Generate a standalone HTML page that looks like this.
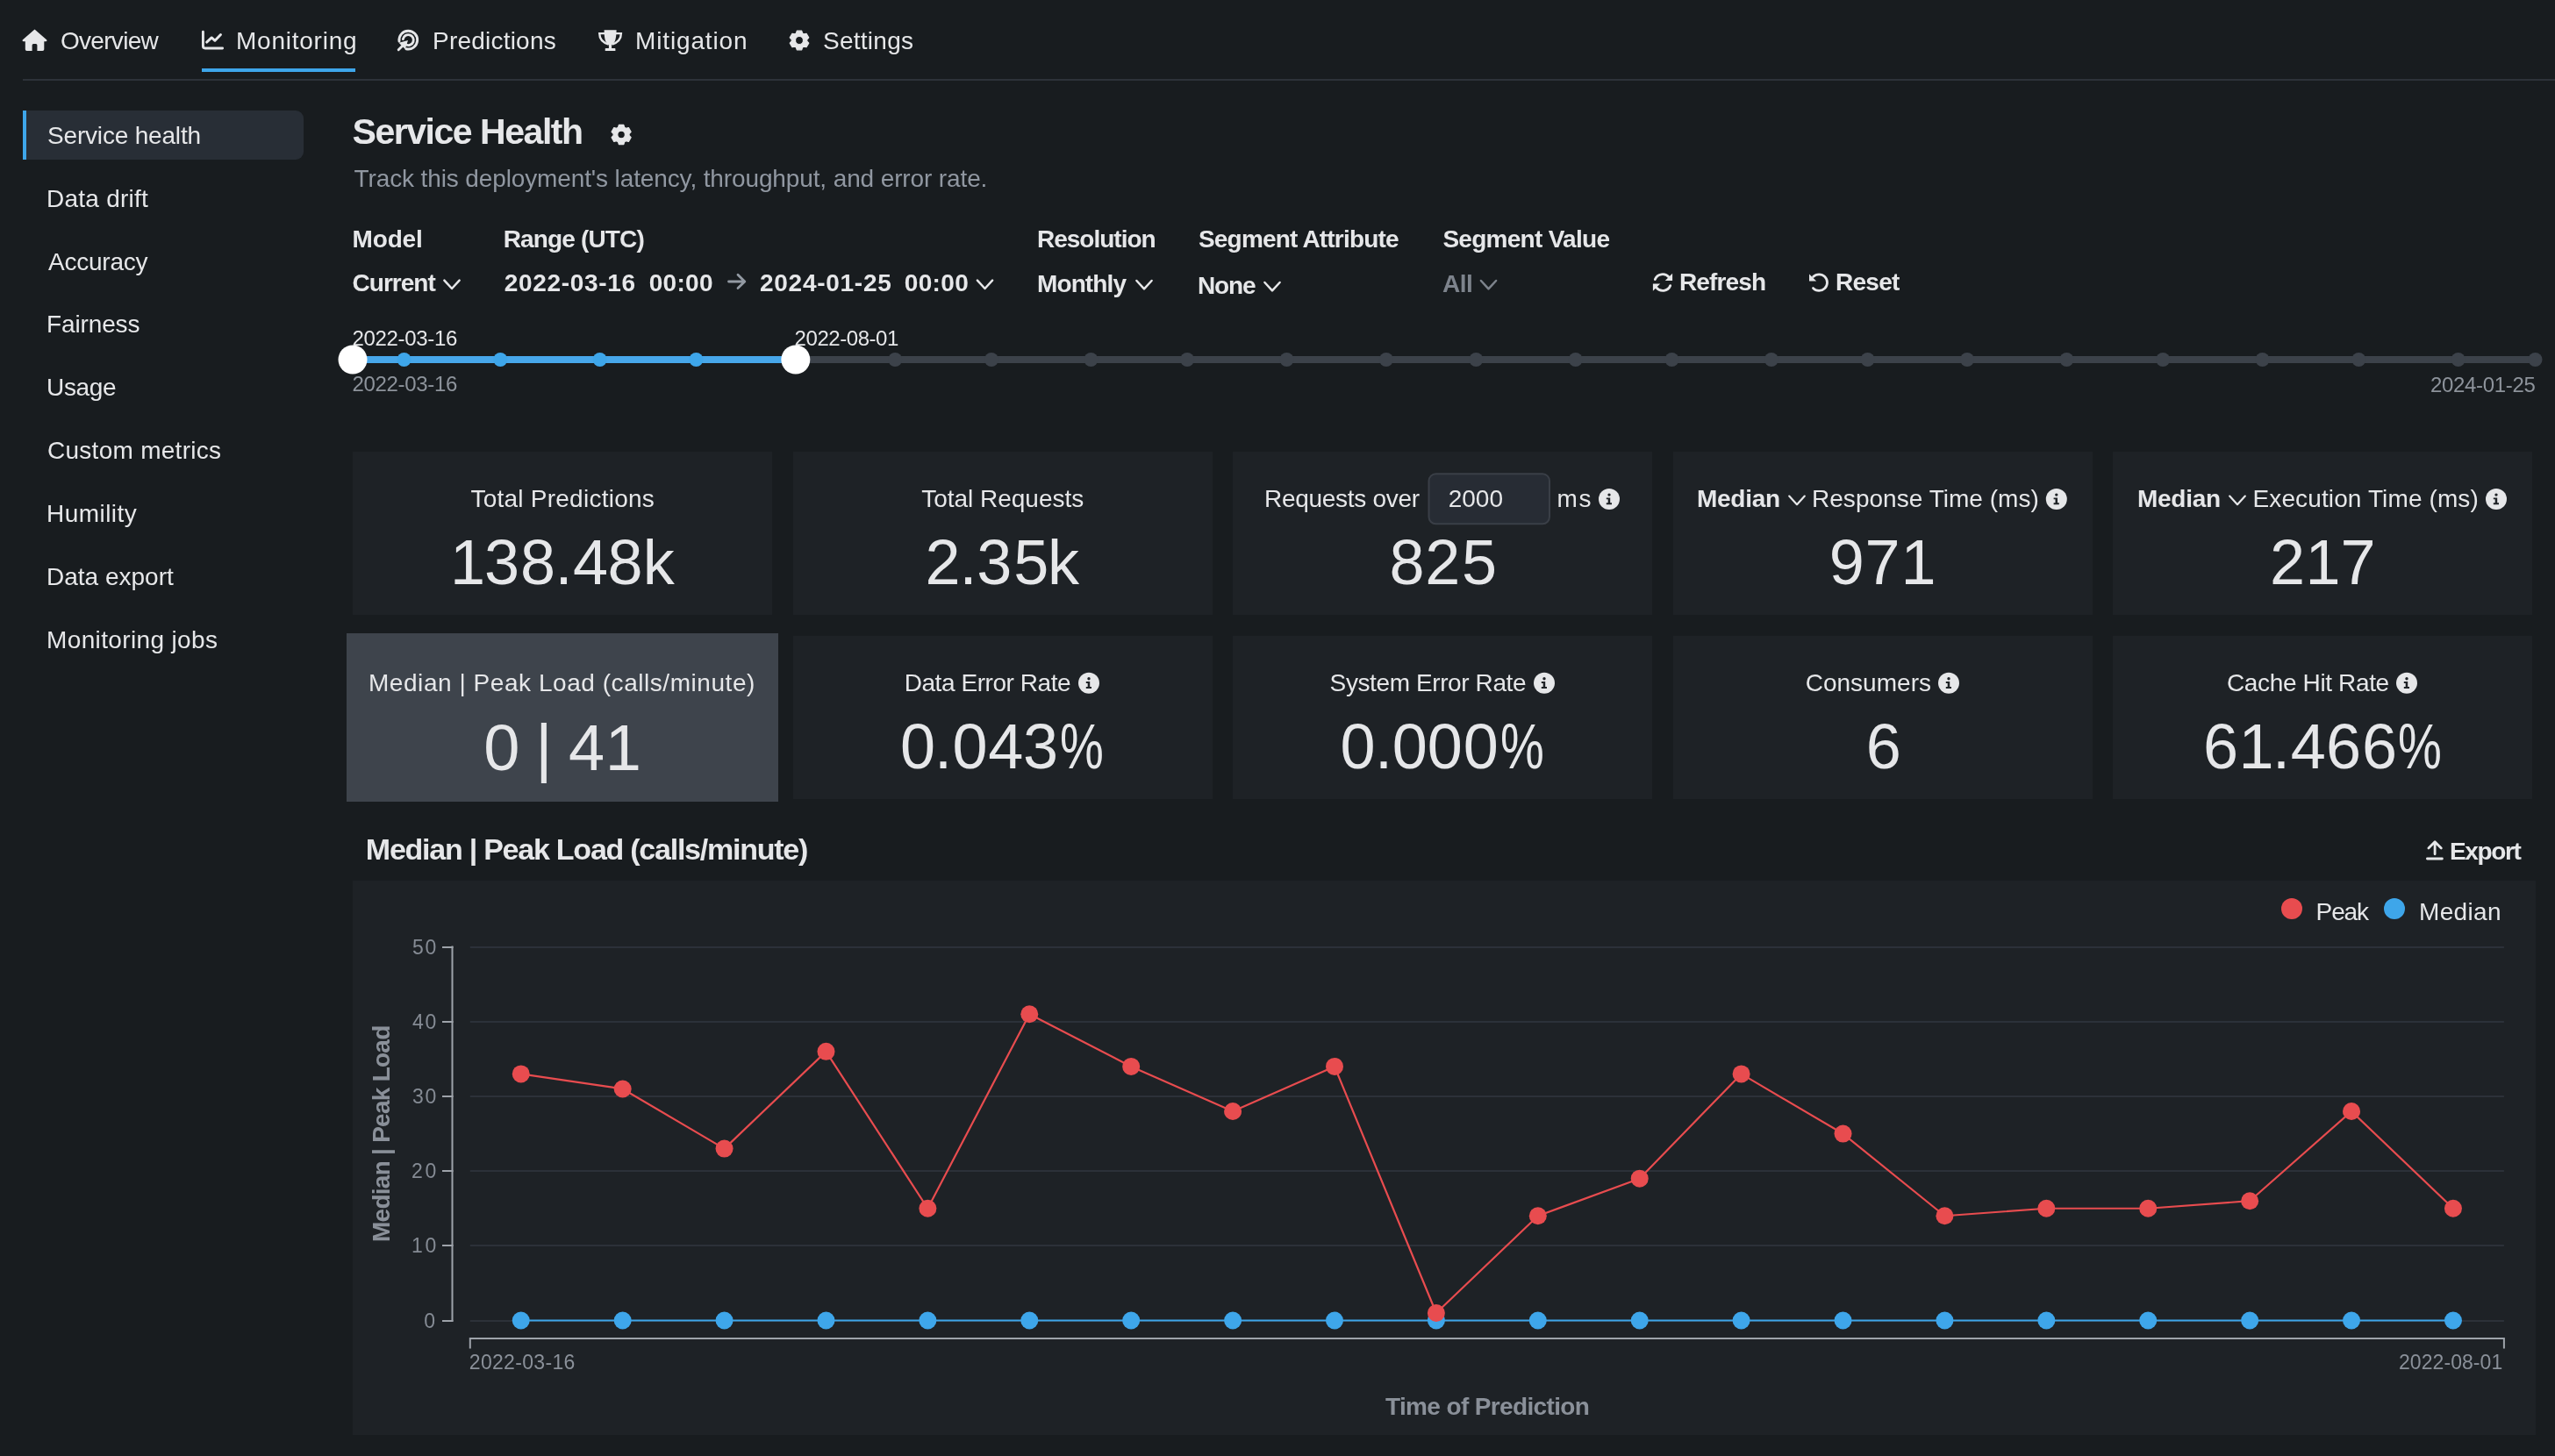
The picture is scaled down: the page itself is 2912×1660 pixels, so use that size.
<!DOCTYPE html>
<html><head><meta charset="utf-8"><style>
html,body{margin:0;padding:0;}
body{width:2912px;height:1660px;background:#181c1f;position:relative;overflow:hidden;font-family:"Liberation Sans",sans-serif;}
.t{position:absolute;white-space:pre;line-height:1;}
.r{position:absolute;}
svg{position:absolute;left:0;top:0;}
</style></head><body>
<div class="r" style="left:230px;top:78px;width:175px;height:4px;background:#3ea6ea;"></div><div class="r" style="left:26px;top:90px;width:2886px;height:2px;background:#2d3239;"></div><div class="r" style="left:26px;top:126px;width:320px;height:56px;background:#282e36;border-radius:0 9px 9px 0;"></div><div class="r" style="left:26px;top:126px;width:4px;height:56px;background:#3ea6ea;"></div><div class="r" style="left:402px;top:515px;width:477.5px;height:186px;background:#1e2226;"></div><div class="r" style="left:395px;top:722px;width:492px;height:192px;background:#3e444c;"></div><div class="r" style="left:904px;top:515px;width:477.5px;height:186px;background:#1e2226;"></div><div class="r" style="left:904px;top:725px;width:477.5px;height:186px;background:#1e2226;"></div><div class="r" style="left:1405px;top:515px;width:477.5px;height:186px;background:#1e2226;"></div><div class="r" style="left:1405px;top:725px;width:477.5px;height:186px;background:#1e2226;"></div><div class="r" style="left:1907px;top:515px;width:477.5px;height:186px;background:#1e2226;"></div><div class="r" style="left:1907px;top:725px;width:477.5px;height:186px;background:#1e2226;"></div><div class="r" style="left:2408px;top:515px;width:477.5px;height:186px;background:#1e2226;"></div><div class="r" style="left:2408px;top:725px;width:477.5px;height:186px;background:#1e2226;"></div><div class="r" style="left:402px;top:1004px;width:2488px;height:632px;background:#1e2226;"></div>
<svg width="2912" height="1660" viewBox="0 0 2912 1660">
<path fill="#e6e7e9" d="M39.5,33.6 L53.3,45.4 Q54,46.9 52.4,47.3 L50.3,47.3 L50.3,56.2 Q50.3,58 48.5,58 L42.4,58 L42.4,51.6 Q42.4,50.1 40.9,50.1 L38.1,50.1 Q36.6,50.1 36.6,51.6 L36.6,58 L30.6,58 Q28.8,58 28.8,56.2 L28.8,47.3 L26.6,47.3 Q25,46.9 25.7,45.4 Z"/><path fill="none" stroke="#e6e7e9" stroke-width="2.9" stroke-linecap="round" stroke-linejoin="round" d="M231.4,36.3 V52.6 Q231.4,55 233.8,55 H253.6 M235.6,48.1 L241.2,42.9 L245,46.3 L251.5,39.6"/><path fill="none" stroke="#e6e7e9" stroke-width="2.9" stroke-linecap="round" d="M455.00,47.05 A10.4,10.4 0 1 1 462.96,55.73 M459.39,44.56 A6,6 0 1 1 462.76,51.04 M454.2,56.8 L459.5,51.5"/><path fill="#e6e7e9" d="M465,46 L454.6,48.8 L458.2,52.4 L461.8,56 Z"/><path fill="#e6e7e9" d="M688.6,34.3 H702.6 Q702.4,44 700.6,47.5 Q699.2,50 697.1,51.2 V55 H700.6 Q701.4,55 701.4,55.8 V58 H689.7 V55.8 Q689.7,55 690.5,55 H693.9 V51.2 Q691.8,50 690.4,47.5 Q688.6,44 688.6,34.3 Z"/><path fill="none" stroke="#e6e7e9" stroke-width="2.4" d="M689.2,38.1 H683.2 Q683.2,47.5 693.6,50.6 M702,38.1 H707.9 Q707.9,47.5 697.6,50.6"/><path fill="#e6e7e9" stroke="#e6e7e9" stroke-width="1.2" stroke-linejoin="round" fill-rule="evenodd" d="M907.40,37.97 L908.30,35.13 L913.70,35.13 L914.60,37.97 L916.15,38.87 L919.06,38.23 L921.76,42.90 L919.75,45.10 L919.75,46.90 L921.76,49.10 L919.06,53.77 L916.15,53.13 L914.60,54.03 L913.70,56.87 L908.30,56.87 L907.40,54.03 L905.85,53.13 L902.94,53.77 L900.24,49.10 L902.25,46.90 L902.25,45.10 L900.24,42.90 L902.94,38.23 L905.85,38.87 Z M915.5,46 A4.5,4.5 0 1 0 906.5,46 A4.5,4.5 0 1 0 915.5,46 Z"/><path fill="#e6e7e9" stroke="#e6e7e9" stroke-width="1.2" stroke-linejoin="round" fill-rule="evenodd" d="M704.50,145.25 L705.40,142.32 L710.80,142.32 L711.70,145.25 L713.44,146.26 L716.43,145.57 L719.13,150.25 L717.04,152.49 L717.04,154.51 L719.13,156.75 L716.43,161.43 L713.44,160.74 L711.70,161.75 L710.80,164.68 L705.40,164.68 L704.50,161.75 L702.76,160.74 L699.77,161.43 L697.07,156.75 L699.16,154.51 L699.16,152.49 L697.07,150.25 L699.77,145.57 L702.76,146.26 Z M712.4,153.5 A4.3,4.3 0 1 0 703.8000000000001,153.5 A4.3,4.3 0 1 0 712.4,153.5 Z"/><polyline fill="none" stroke="#e6e7e9" stroke-width="2.5" stroke-linecap="round" stroke-linejoin="round" points="506.40,319.60 515.00,329.00 523.60,319.60"/><polyline fill="none" stroke="#e6e7e9" stroke-width="2.5" stroke-linecap="round" stroke-linejoin="round" points="1113.90,319.60 1122.50,329.00 1131.10,319.60"/><polyline fill="none" stroke="#e6e7e9" stroke-width="2.5" stroke-linecap="round" stroke-linejoin="round" points="1295.40,320.00 1304.00,329.40 1312.60,320.00"/><polyline fill="none" stroke="#e6e7e9" stroke-width="2.5" stroke-linecap="round" stroke-linejoin="round" points="1441.40,322.00 1450.00,331.40 1458.60,322.00"/><polyline fill="none" stroke="#7d838c" stroke-width="2.5" stroke-linecap="round" stroke-linejoin="round" points="1687.90,320.00 1696.50,329.40 1705.10,320.00"/><path fill="none" stroke="#939aa3" stroke-width="2.8" stroke-linecap="round" stroke-linejoin="round" d="M830.5,321 H848.6 M841,313.3 L848.8,321 L841,328.5"/><path fill="none" stroke="#e6e7e9" stroke-width="2.8" stroke-linecap="round" d="M1886.3,318.6 A9.3,9.3 0 0 1 1902.2,316.2 M1903.7,325.6 A9.3,9.3 0 0 1 1887.8,327.9"/><path fill="#e6e7e9" d="M1897.8,320 H1906.1 V311.8 Z M1883.9,323.6 H1892.2 L1883.9,331.8 Z"/><path fill="none" stroke="#e6e7e9" stroke-width="2.8" stroke-linecap="round" d="M2066.6,315.6 A9.3,9.3 0 1 1 2066.5,328.6"/><path fill="#e6e7e9" d="M2062,312.4 V320.6 H2070.2 Z"/><line x1="402" y1="410" x2="906.82" y2="410" stroke="#47a7ea" stroke-width="8"/><line x1="906.82" y1="410" x2="2889.5" y2="410" stroke="#3c424a" stroke-width="8"/><circle cx="460.53" cy="410" r="8" fill="#3ea6ea"/><circle cx="570.27" cy="410" r="8" fill="#3ea6ea"/><circle cx="683.67" cy="410" r="8" fill="#3ea6ea"/><circle cx="793.42" cy="410" r="8" fill="#3ea6ea"/><circle cx="1020.22" cy="410" r="8" fill="#3c424a"/><circle cx="1129.96" cy="410" r="8" fill="#3c424a"/><circle cx="1243.36" cy="410" r="8" fill="#3c424a"/><circle cx="1353.10" cy="410" r="8" fill="#3c424a"/><circle cx="1466.50" cy="410" r="8" fill="#3c424a"/><circle cx="1579.90" cy="410" r="8" fill="#3c424a"/><circle cx="1682.33" cy="410" r="8" fill="#3c424a"/><circle cx="1795.73" cy="410" r="8" fill="#3c424a"/><circle cx="1905.47" cy="410" r="8" fill="#3c424a"/><circle cx="2018.88" cy="410" r="8" fill="#3c424a"/><circle cx="2128.62" cy="410" r="8" fill="#3c424a"/><circle cx="2242.02" cy="410" r="8" fill="#3c424a"/><circle cx="2355.42" cy="410" r="8" fill="#3c424a"/><circle cx="2465.16" cy="410" r="8" fill="#3c424a"/><circle cx="2578.56" cy="410" r="8" fill="#3c424a"/><circle cx="2688.31" cy="410" r="8" fill="#3c424a"/><circle cx="2801.71" cy="410" r="8" fill="#3c424a"/><circle cx="2889.5" cy="410" r="8" fill="#3c424a"/><circle cx="402.00" cy="410" r="16.5" fill="#ffffff"/><circle cx="906.82" cy="410" r="16.5" fill="#ffffff"/><rect x="1628.5" y="540.3" width="137.5" height="57" rx="8" fill="#272c34" stroke="#3a3f47" stroke-width="2"/><polyline fill="none" stroke="#e6e7e9" stroke-width="2.2" stroke-linecap="round" stroke-linejoin="round" points="2039.20,565.60 2048.00,575.20 2056.80,565.60"/><polyline fill="none" stroke="#e6e7e9" stroke-width="2.2" stroke-linecap="round" stroke-linejoin="round" points="2541.20,565.60 2550.00,575.20 2558.80,565.60"/><circle cx="1834" cy="569" r="12" fill="#e6e7e9"/><circle cx="1834" cy="564.1" r="1.7" fill="#1e2226"/><path fill="#1e2226" d="M1830.8,567.4 H1835.2 V573.3 H1837 V575.2 H1830.8 V573.3 H1832.7 V569.3 H1830.8 Z"/><circle cx="2343.8" cy="569" r="12" fill="#e6e7e9"/><circle cx="2343.8" cy="564.1" r="1.7" fill="#1e2226"/><path fill="#1e2226" d="M2340.6000000000004,567.4 H2345.0 V573.3 H2346.8 V575.2 H2340.6000000000004 V573.3 H2342.5 V569.3 H2340.6000000000004 Z"/><circle cx="2845" cy="569" r="12" fill="#e6e7e9"/><circle cx="2845" cy="564.1" r="1.7" fill="#1e2226"/><path fill="#1e2226" d="M2841.8,567.4 H2846.2 V573.3 H2848 V575.2 H2841.8 V573.3 H2843.7 V569.3 H2841.8 Z"/><circle cx="1241" cy="778.7" r="12" fill="#e6e7e9"/><circle cx="1241" cy="773.8000000000001" r="1.7" fill="#1e2226"/><path fill="#1e2226" d="M1237.8,777.1 H1242.2 V783.0 H1244 V784.9000000000001 H1237.8 V783.0 H1239.7 V779.0 H1237.8 Z"/><circle cx="1760" cy="778.7" r="12" fill="#e6e7e9"/><circle cx="1760" cy="773.8000000000001" r="1.7" fill="#1e2226"/><path fill="#1e2226" d="M1756.8,777.1 H1761.2 V783.0 H1763 V784.9000000000001 H1756.8 V783.0 H1758.7 V779.0 H1756.8 Z"/><circle cx="2221" cy="778.7" r="12" fill="#e6e7e9"/><circle cx="2221" cy="773.8000000000001" r="1.7" fill="#1e2226"/><path fill="#1e2226" d="M2217.8,777.1 H2222.2 V783.0 H2224 V784.9000000000001 H2217.8 V783.0 H2219.7 V779.0 H2217.8 Z"/><circle cx="2743" cy="778.7" r="12" fill="#e6e7e9"/><circle cx="2743" cy="773.8000000000001" r="1.7" fill="#1e2226"/><path fill="#1e2226" d="M2739.8,777.1 H2744.2 V783.0 H2746 V784.9000000000001 H2739.8 V783.0 H2741.7 V779.0 H2739.8 Z"/><path fill="none" stroke="#e6e7e9" stroke-width="2.8" stroke-linecap="round" stroke-linejoin="round" d="M2767.9,967 L2775.1,959.8 L2782.3,967 M2775.1,960.5 V973.8 M2766.4,979 H2783.4"/><circle cx="2612" cy="1036" r="12" fill="#e84c4f"/><circle cx="2729" cy="1036" r="12" fill="#3ea6ea"/><line x1="535.8" y1="1506" x2="2853.9" y2="1506" stroke="#2c3139" stroke-width="2"/><line x1="504" y1="1506" x2="516.5" y2="1506" stroke="#9ea3aa" stroke-width="2"/><line x1="535.8" y1="1420" x2="2853.9" y2="1420" stroke="#2c3139" stroke-width="2"/><line x1="504" y1="1420" x2="516.5" y2="1420" stroke="#9ea3aa" stroke-width="2"/><line x1="535.8" y1="1335" x2="2853.9" y2="1335" stroke="#2c3139" stroke-width="2"/><line x1="504" y1="1335" x2="516.5" y2="1335" stroke="#9ea3aa" stroke-width="2"/><line x1="535.8" y1="1250" x2="2853.9" y2="1250" stroke="#2c3139" stroke-width="2"/><line x1="504" y1="1250" x2="516.5" y2="1250" stroke="#9ea3aa" stroke-width="2"/><line x1="535.8" y1="1165" x2="2853.9" y2="1165" stroke="#2c3139" stroke-width="2"/><line x1="504" y1="1165" x2="516.5" y2="1165" stroke="#9ea3aa" stroke-width="2"/><line x1="535.8" y1="1080" x2="2853.9" y2="1080" stroke="#2c3139" stroke-width="2"/><line x1="504" y1="1080" x2="516.5" y2="1080" stroke="#9ea3aa" stroke-width="2"/><line x1="515.5" y1="1078.62" x2="515.5" y2="1506.50" stroke="#9ea3aa" stroke-width="2"/><path fill="none" stroke="#9ea3aa" stroke-width="2" d="M535.8,1537.5 V1526 H2853.9 V1537.5"/><polyline fill="none" stroke="#3ea6ea" stroke-width="2.2" points="593.75,1505.5 2795.95,1505.5"/><circle cx="593.75" cy="1505.5" r="10" fill="#3ea6ea"/><circle cx="709.66" cy="1505.5" r="10" fill="#3ea6ea"/><circle cx="825.56" cy="1505.5" r="10" fill="#3ea6ea"/><circle cx="941.47" cy="1505.5" r="10" fill="#3ea6ea"/><circle cx="1057.37" cy="1505.5" r="10" fill="#3ea6ea"/><circle cx="1173.28" cy="1505.5" r="10" fill="#3ea6ea"/><circle cx="1289.18" cy="1505.5" r="10" fill="#3ea6ea"/><circle cx="1405.09" cy="1505.5" r="10" fill="#3ea6ea"/><circle cx="1520.99" cy="1505.5" r="10" fill="#3ea6ea"/><circle cx="1636.90" cy="1505.5" r="10" fill="#3ea6ea"/><circle cx="1752.80" cy="1505.5" r="10" fill="#3ea6ea"/><circle cx="1868.71" cy="1505.5" r="10" fill="#3ea6ea"/><circle cx="1984.61" cy="1505.5" r="10" fill="#3ea6ea"/><circle cx="2100.52" cy="1505.5" r="10" fill="#3ea6ea"/><circle cx="2216.42" cy="1505.5" r="10" fill="#3ea6ea"/><circle cx="2332.33" cy="1505.5" r="10" fill="#3ea6ea"/><circle cx="2448.23" cy="1505.5" r="10" fill="#3ea6ea"/><circle cx="2564.14" cy="1505.5" r="10" fill="#3ea6ea"/><circle cx="2680.04" cy="1505.5" r="10" fill="#3ea6ea"/><circle cx="2795.95" cy="1505.5" r="10" fill="#3ea6ea"/><polyline fill="none" stroke="#e84c4f" stroke-width="2.2" stroke-linejoin="round" points="593.75,1224.42 709.66,1241.45 825.56,1309.60 941.47,1198.87 1057.37,1377.74 1173.28,1156.28 1289.18,1215.90 1405.09,1267.01 1520.99,1215.90 1636.90,1496.98 1752.80,1386.25 1868.71,1343.67 1984.61,1224.42 2100.52,1292.56 2216.42,1386.25 2332.33,1377.74 2448.23,1377.74 2564.14,1369.22 2680.04,1267.01 2795.95,1377.74"/><circle cx="593.75" cy="1224.42" r="10" fill="#e84c4f"/><circle cx="709.66" cy="1241.45" r="10" fill="#e84c4f"/><circle cx="825.56" cy="1309.60" r="10" fill="#e84c4f"/><circle cx="941.47" cy="1198.87" r="10" fill="#e84c4f"/><circle cx="1057.37" cy="1377.74" r="10" fill="#e84c4f"/><circle cx="1173.28" cy="1156.28" r="10" fill="#e84c4f"/><circle cx="1289.18" cy="1215.90" r="10" fill="#e84c4f"/><circle cx="1405.09" cy="1267.01" r="10" fill="#e84c4f"/><circle cx="1520.99" cy="1215.90" r="10" fill="#e84c4f"/><circle cx="1636.90" cy="1496.98" r="10" fill="#e84c4f"/><circle cx="1752.80" cy="1386.25" r="10" fill="#e84c4f"/><circle cx="1868.71" cy="1343.67" r="10" fill="#e84c4f"/><circle cx="1984.61" cy="1224.42" r="10" fill="#e84c4f"/><circle cx="2100.52" cy="1292.56" r="10" fill="#e84c4f"/><circle cx="2216.42" cy="1386.25" r="10" fill="#e84c4f"/><circle cx="2332.33" cy="1377.74" r="10" fill="#e84c4f"/><circle cx="2448.23" cy="1377.74" r="10" fill="#e84c4f"/><circle cx="2564.14" cy="1369.22" r="10" fill="#e84c4f"/><circle cx="2680.04" cy="1267.01" r="10" fill="#e84c4f"/><circle cx="2795.95" cy="1377.74" r="10" fill="#e84c4f"/>
</svg>
<div id="tl" style="position:absolute;left:0;top:0;width:2912px;height:1660px;will-change:transform"><div class="t" style="left:69.00px;top:33.00px;font-size:28px;font-weight:400;color:#e6e7e9;letter-spacing:-0.710px">Overview</div><div class="t" style="left:269.00px;top:33.00px;font-size:28px;font-weight:400;color:#e6e7e9;letter-spacing:0.760px">Monitoring</div><div class="t" style="left:493.00px;top:33.00px;font-size:28px;font-weight:400;color:#e6e7e9;letter-spacing:0.219px">Predictions</div><div class="t" style="left:724.00px;top:33.00px;font-size:28px;font-weight:400;color:#e6e7e9;letter-spacing:0.860px">Mitigation</div><div class="t" style="left:938.00px;top:33.00px;font-size:28px;font-weight:400;color:#e6e7e9;letter-spacing:0.261px">Settings</div><div class="t" style="left:54.00px;top:141.00px;font-size:28px;font-weight:400;color:#e6e7e9;letter-spacing:-0.182px">Service health</div><div class="t" style="left:53.00px;top:213.00px;font-size:28px;font-weight:400;color:#e6e7e9;letter-spacing:0.242px">Data drift</div><div class="t" style="left:55.00px;top:285.00px;font-size:28px;font-weight:400;color:#e6e7e9;letter-spacing:-0.235px">Accuracy</div><div class="t" style="left:53.00px;top:356.00px;font-size:28px;font-weight:400;color:#e6e7e9;letter-spacing:-0.124px">Fairness</div><div class="t" style="left:53.00px;top:428.00px;font-size:28px;font-weight:400;color:#e6e7e9;letter-spacing:-0.341px">Usage</div><div class="t" style="left:54.00px;top:500.00px;font-size:28px;font-weight:400;color:#e6e7e9;letter-spacing:0.272px">Custom metrics</div><div class="t" style="left:53.00px;top:572.00px;font-size:28px;font-weight:400;color:#e6e7e9;letter-spacing:0.463px">Humility</div><div class="t" style="left:53.00px;top:644.00px;font-size:28px;font-weight:400;color:#e6e7e9;letter-spacing:0.004px">Data export</div><div class="t" style="left:53.00px;top:716.00px;font-size:28px;font-weight:400;color:#e6e7e9;letter-spacing:0.366px">Monitoring jobs</div><div class="t" style="left:401.50px;top:130.00px;font-size:41px;font-weight:700;color:#e6e7e9;letter-spacing:-1.465px">Service Health</div><div class="t" style="left:403.60px;top:190.00px;font-size:28px;font-weight:400;color:#9097a1;letter-spacing:-0.123px">Track this deployment&#x27;s latency, throughput, and error rate.</div><div class="t" style="left:401.50px;top:259.00px;font-size:28px;font-weight:700;color:#e6e7e9;letter-spacing:-0.151px">Model</div><div class="t" style="left:573.70px;top:259.00px;font-size:28px;font-weight:700;color:#e6e7e9;letter-spacing:-0.852px">Range (UTC)</div><div class="t" style="left:1182.00px;top:259.00px;font-size:28px;font-weight:700;color:#e6e7e9;letter-spacing:-1.007px">Resolution</div><div class="t" style="left:1366.00px;top:259.00px;font-size:28px;font-weight:700;color:#e6e7e9;letter-spacing:-0.819px">Segment Attribute</div><div class="t" style="left:1644.40px;top:259.00px;font-size:28px;font-weight:700;color:#e6e7e9;letter-spacing:-0.718px">Segment Value</div><div class="t" style="left:401.50px;top:309.00px;font-size:28px;font-weight:700;color:#e6e7e9;letter-spacing:-0.965px">Current</div><div class="t" style="left:574.70px;top:309.00px;font-size:28px;font-weight:700;color:#e6e7e9;letter-spacing:0.672px">2022-03-16</div><div class="t" style="left:739.70px;top:309.00px;font-size:28px;font-weight:700;color:#e6e7e9;letter-spacing:0.315px">00:00</div><div class="t" style="left:866.00px;top:309.00px;font-size:28px;font-weight:700;color:#e6e7e9;letter-spacing:0.727px">2024-01-25</div><div class="t" style="left:1030.80px;top:309.00px;font-size:28px;font-weight:700;color:#e6e7e9;letter-spacing:0.340px">00:00</div><div class="t" style="left:1182.00px;top:310.00px;font-size:28px;font-weight:700;color:#e6e7e9;letter-spacing:-0.890px">Monthly</div><div class="t" style="left:1365.00px;top:312.00px;font-size:28px;font-weight:700;color:#e6e7e9;letter-spacing:-1.143px">None</div><div class="t" style="left:1644.00px;top:310.00px;font-size:28px;font-weight:700;color:#7d838c;letter-spacing:-0.500px">All</div><div class="t" style="left:1914.00px;top:308.00px;font-size:28px;font-weight:700;color:#e6e7e9;letter-spacing:-0.860px">Refresh</div><div class="t" style="left:2092.00px;top:308.00px;font-size:28px;font-weight:700;color:#e6e7e9;letter-spacing:-0.734px">Reset</div><div class="t" style="left:401.50px;top:374.00px;font-size:24px;font-weight:400;color:#e6e7e9;letter-spacing:-0.324px">2022-03-16</div><div class="t" style="left:905.60px;top:374.00px;font-size:24px;font-weight:400;color:#e6e7e9;letter-spacing:-0.446px">2022-08-01</div><div class="t" style="left:401.50px;top:426.00px;font-size:24px;font-weight:400;color:#8d939b;letter-spacing:-0.324px">2022-03-16</div><div class="t" style="left:2770.00px;top:427.00px;font-size:24px;font-weight:400;color:#8d939b;letter-spacing:-0.324px">2024-01-25</div><div class="t" style="left:536.40px;top:555.00px;font-size:28px;font-weight:400;color:#e6e7e9;letter-spacing:0.248px">Total Predictions</div><div class="t" style="left:1050.30px;top:555.00px;font-size:28px;font-weight:400;color:#e6e7e9;letter-spacing:-0.024px">Total Requests</div><div class="t" style="left:1441.00px;top:555.00px;font-size:28px;font-weight:400;color:#e6e7e9;letter-spacing:-0.284px">Requests over</div><div class="t" style="left:1650.80px;top:555.00px;font-size:28px;font-weight:400;color:#e6e7e9;letter-spacing:-0.039px">2000</div><div class="t" style="left:1774.50px;top:555.00px;font-size:28px;font-weight:400;color:#e6e7e9;letter-spacing:1.576px">ms</div><div class="t" style="left:1934.00px;top:555.00px;font-size:28px;font-weight:700;color:#e6e7e9;letter-spacing:-0.270px">Median</div><div class="t" style="left:2065.00px;top:555.00px;font-size:28px;font-weight:400;color:#e6e7e9;letter-spacing:0.031px">Response Time (ms)</div><div class="t" style="left:2436.00px;top:555.00px;font-size:28px;font-weight:700;color:#e6e7e9;letter-spacing:-0.270px">Median</div><div class="t" style="left:2567.50px;top:555.00px;font-size:28px;font-weight:400;color:#e6e7e9;letter-spacing:0.119px">Execution Time (ms)</div><div class="t" style="left:420.00px;top:765.00px;font-size:28px;font-weight:400;color:#e6e7e9;letter-spacing:0.547px">Median | Peak Load (calls/minute)</div><div class="t" style="left:1030.70px;top:765.00px;font-size:28px;font-weight:400;color:#e6e7e9;letter-spacing:-0.443px">Data Error Rate</div><div class="t" style="left:1515.60px;top:765.00px;font-size:28px;font-weight:400;color:#e6e7e9;letter-spacing:-0.394px">System Error Rate</div><div class="t" style="left:2057.70px;top:765.00px;font-size:28px;font-weight:400;color:#e6e7e9;letter-spacing:0.018px">Consumers</div><div class="t" style="left:2126.70px;top:815.00px;font-size:72px;font-weight:400;color:#e6e7e9;letter-spacing:0.000px">6</div><div class="t" style="left:2538.00px;top:765.00px;font-size:28px;font-weight:400;color:#e6e7e9;letter-spacing:-0.361px">Cache Hit Rate</div><div class="t" style="left:416.80px;top:951.00px;font-size:34px;font-weight:700;color:#e6e7e9;letter-spacing:-1.240px">Median | Peak Load (calls/minute)</div><div class="t" style="left:2792.00px;top:957.00px;font-size:28px;font-weight:700;color:#e6e7e9;letter-spacing:-1.350px">Export</div><div class="t" style="left:2639.60px;top:1026.00px;font-size:28px;font-weight:400;color:#e6e7e9;letter-spacing:-1.140px">Peak</div><div class="t" style="left:2757.00px;top:1026.00px;font-size:28px;font-weight:400;color:#e6e7e9;letter-spacing:0.348px">Median</div><div class="t" style="left:483.30px;top:1495.00px;font-size:23px;font-weight:400;color:#858b94;letter-spacing:0.000px">0</div><div class="t" style="left:469.00px;top:1409.00px;font-size:23px;font-weight:400;color:#858b94;letter-spacing:2.708px">10</div><div class="t" style="left:469.00px;top:1324.00px;font-size:23px;font-weight:400;color:#858b94;letter-spacing:2.708px">20</div><div class="t" style="left:470.00px;top:1239.00px;font-size:23px;font-weight:400;color:#858b94;letter-spacing:1.708px">30</div><div class="t" style="left:470.00px;top:1154.00px;font-size:23px;font-weight:400;color:#858b94;letter-spacing:1.708px">40</div><div class="t" style="left:470.00px;top:1069.00px;font-size:23px;font-weight:400;color:#858b94;letter-spacing:1.708px">50</div><div class="t" style="left:534.80px;top:1542.00px;font-size:23px;font-weight:400;color:#8a9099;letter-spacing:0.316px">2022-03-16</div><div class="t" style="left:2734.00px;top:1542.00px;font-size:23px;font-weight:400;color:#8a9099;letter-spacing:0.060px">2022-08-01</div><div class="t" style="left:1579.00px;top:1590.00px;font-size:28px;font-weight:700;color:#8a9099;letter-spacing:-0.638px">Time of Prediction</div><div class="t" style="left:551.20px;top:816px;font-size:74px;color:#e6e7e9;">0</div><div class="t" style="left:610.30px;top:816px;font-size:74px;color:#e6e7e9;">|</div><div class="t" style="left:648.00px;top:816px;font-size:74px;color:#e6e7e9;">4</div><div class="t" style="left:689.80px;top:816px;font-size:74px;color:#e6e7e9;">1</div><div class="t" style="left:513.00px;top:605px;font-size:72px;color:#e6e7e9;">1</div><div class="t" style="left:552.00px;top:605px;font-size:72px;color:#e6e7e9;">3</div><div class="t" style="left:593.10px;top:605px;font-size:72px;color:#e6e7e9;">8</div><div class="t" style="left:632.40px;top:605px;font-size:72px;color:#e6e7e9;">.</div><div class="t" style="left:653.00px;top:605px;font-size:72px;color:#e6e7e9;">4</div><div class="t" style="left:692.60px;top:605px;font-size:72px;color:#e6e7e9;">8</div><div class="t" style="left:732.80px;top:605px;font-size:72px;color:#e6e7e9;">k</div><div class="t" style="left:1054.60px;top:605px;font-size:72px;color:#e6e7e9;">2</div><div class="t" style="left:1093.60px;top:605px;font-size:72px;color:#e6e7e9;">.</div><div class="t" style="left:1113.30px;top:605px;font-size:72px;color:#e6e7e9;">3</div><div class="t" style="left:1155.30px;top:605px;font-size:72px;color:#e6e7e9;">5</div><div class="t" style="left:1194.00px;top:605px;font-size:72px;color:#e6e7e9;">k</div><div class="t" style="left:1583.40px;top:605px;font-size:72px;color:#e6e7e9;">8</div><div class="t" style="left:1624.30px;top:605px;font-size:72px;color:#e6e7e9;">2</div><div class="t" style="left:1665.90px;top:605px;font-size:72px;color:#e6e7e9;">5</div><div class="t" style="left:2084.70px;top:605px;font-size:72px;color:#e6e7e9;">9</div><div class="t" style="left:2125.40px;top:605px;font-size:72px;color:#e6e7e9;">7</div><div class="t" style="left:2166.50px;top:605px;font-size:72px;color:#e6e7e9;">1</div><div class="t" style="left:2587.10px;top:605px;font-size:72px;color:#e6e7e9;">2</div><div class="t" style="left:2627.50px;top:605px;font-size:72px;color:#e6e7e9;">1</div><div class="t" style="left:2667.50px;top:605px;font-size:72px;color:#e6e7e9;">7</div><div class="t" style="left:1026.00px;top:815px;font-size:72px;color:#e6e7e9;">0</div><div class="t" style="left:1065.00px;top:815px;font-size:72px;color:#e6e7e9;">.</div><div class="t" style="left:1085.40px;top:815px;font-size:72px;color:#e6e7e9;">0</div><div class="t" style="left:1126.20px;top:815px;font-size:72px;color:#e6e7e9;">4</div><div class="t" style="left:1166.10px;top:815px;font-size:72px;color:#e6e7e9;">3</div><div class="t" style="left:1201.00px;top:815px;font-size:72px;color:#e6e7e9;transform-origin:32.00px 0;transform:scaleX(0.778);">%</div><div class="t" style="left:1527.40px;top:815px;font-size:72px;color:#e6e7e9;">0</div><div class="t" style="left:1567.00px;top:815px;font-size:72px;color:#e6e7e9;">.</div><div class="t" style="left:1586.80px;top:815px;font-size:72px;color:#e6e7e9;">0</div><div class="t" style="left:1626.80px;top:815px;font-size:72px;color:#e6e7e9;">0</div><div class="t" style="left:1667.70px;top:815px;font-size:72px;color:#e6e7e9;">0</div><div class="t" style="left:1702.50px;top:815px;font-size:72px;color:#e6e7e9;transform-origin:32.00px 0;transform:scaleX(0.778);">%</div><div class="t" style="left:2510.90px;top:815px;font-size:72px;color:#e6e7e9;">6</div><div class="t" style="left:2551.40px;top:815px;font-size:72px;color:#e6e7e9;">1</div><div class="t" style="left:2590.10px;top:815px;font-size:72px;color:#e6e7e9;">.</div><div class="t" style="left:2610.80px;top:815px;font-size:72px;color:#e6e7e9;">4</div><div class="t" style="left:2651.10px;top:815px;font-size:72px;color:#e6e7e9;">6</div><div class="t" style="left:2692.00px;top:815px;font-size:72px;color:#e6e7e9;">6</div><div class="t" style="left:2726.00px;top:815px;font-size:72px;color:#e6e7e9;transform-origin:32.00px 0;transform:scaleX(0.778);">%</div><div class="t" style="left:421.00px;top:1416.40px;font-size:28px;font-weight:700;color:#8a9099;letter-spacing:-0.741px;transform-origin:0 0;transform:rotate(-90deg)">Median | Peak Load</div></div>
</body></html>
